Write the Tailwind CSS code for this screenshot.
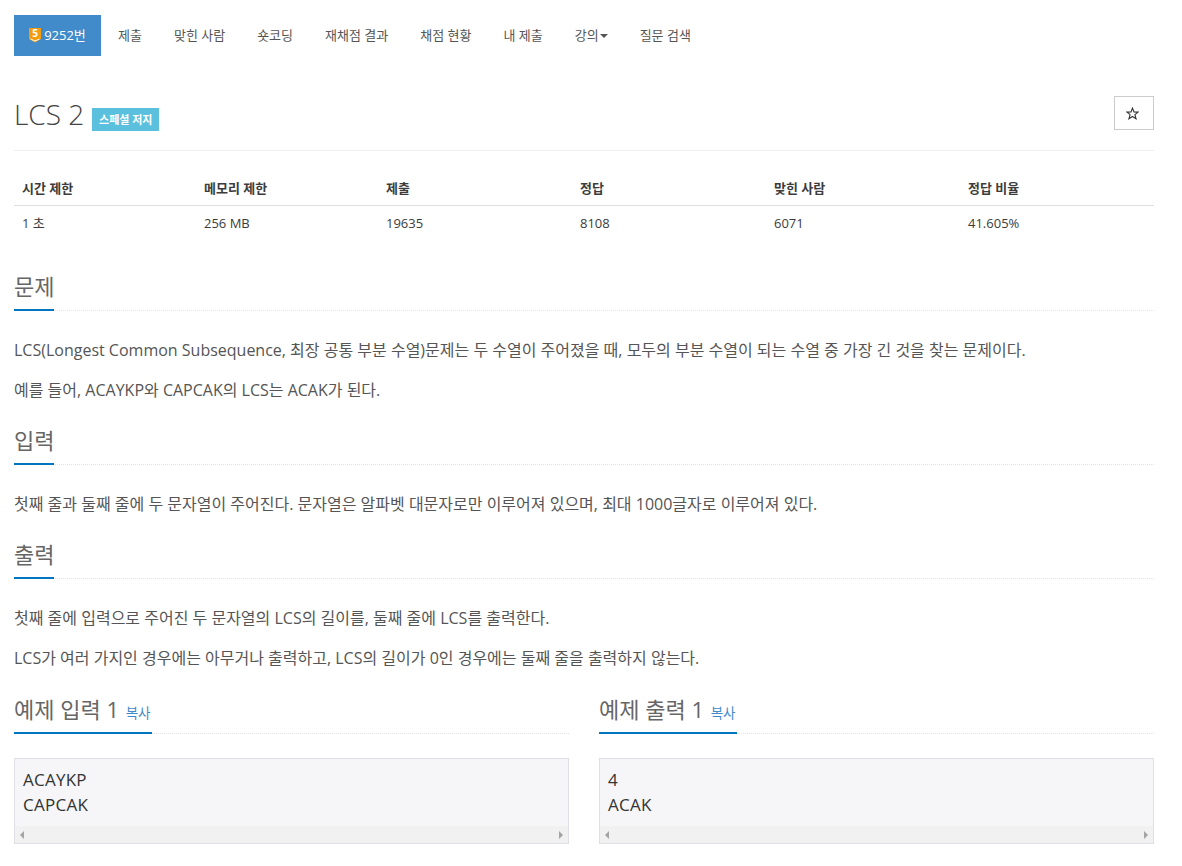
<!DOCTYPE html>
<html lang="ko">

<head>
    <meta charset="UTF-8">
    <title>LCS 2</title>
    <script src="https://cdn.jsdelivr.net/npm/@tailwindcss/browser@4"></script>
</head>

<body class="bg-white text-[#555] font-['Open_Sans','Noto_Sans_CJK_KR',sans-serif] text-[13px] overflow-hidden h-[866px]">
    <div class="w-[1140px] ml-[14px]">

        <!-- 메뉴 -->
        <ul class="flex pt-[15px] text-[13px] h-[56px] leading-[41px]">
            <li class="bg-[#428bca] text-white w-[87px] flex items-center justify-center text-[13px]">
                <svg class="w-[12px] h-[15px] mr-[3px] overflow-visible" viewBox="0 0 12 15">
                    <path d="M0 0H12V11L6 14.5L0 11Z" fill="#f59c0c" />
                    <path d="M1.5 11L6 13L10.5 11" fill="none" stroke="#fff" stroke-width="1" />
                    <text x="6" y="9" text-anchor="middle" font-size="10" font-weight="700" fill="#fff">5</text>
                </svg>
                9252번
            </li>
            <li class="ml-[17px]">제출</li>
            <li class="ml-[32px]">맞힌 사람</li>
            <li class="ml-[32px]">숏코딩</li>
            <li class="ml-[32px]">재채점 결과</li>
            <li class="ml-[32px]">채점 현황</li>
            <li class="ml-[32px]">내 제출</li>
            <li class="ml-[32px] flex items-center">강의<span class="w-0 h-0 ml-[1px] border-x-[4px] border-x-transparent border-t-[4px] border-t-[#555]"></span></li>
            <li class="ml-[32px]">질문 검색</li>
        </ul>

        <!-- 제목 -->
        <div class="flex items-start justify-between h-[95px] pt-[40px] border-b border-[#eee]">
            <h1 class="flex items-center text-[28px] leading-[38px] font-light text-[#444] -mt-[1px]">LCS 2
                <span class="ml-[8px] mt-[10px] h-[23px] w-[67px] bg-[#5bc0de] text-white text-[11px] font-bold leading-[23px] text-center">스페셜 저지</span>
            </h1>
            <button class="w-[40px] h-[34px] border border-[#ccc] flex items-center justify-center pr-[3px]">
                <svg class="w-[13px] h-[13px]" viewBox="0 0 14 14" fill="none" stroke="#333" stroke-width="1.2">
                    <path d="M7 1.2L8.6 5.3L13 5.5L9.6 8.2L10.8 12.6L7 10.2L3.2 12.6L4.4 8.2L1 5.5L5.4 5.3Z" />
                </svg>
            </button>
        </div>

        <!-- 제한 표 -->
        <table class="w-full mt-[20px] table-fixed text-left text-[13px] text-[#3c3c3c]">
            <thead>
                <tr class="border-b border-[#ddd] h-[34px]">
                    <th class="w-[182px] pl-[8px] pt-[2px] font-bold">시간 제한</th>
                    <th class="w-[182px] pl-[8px] pt-[2px] font-bold">메모리 제한</th>
                    <th class="w-[194px] pl-[8px] pt-[2px] font-bold">제출</th>
                    <th class="w-[194px] pl-[8px] pt-[2px] font-bold">정답</th>
                    <th class="w-[194px] pl-[8px] pt-[2px] font-bold">맞힌 사람</th>
                    <th class="pl-[8px] pt-[2px] font-bold">정답 비율</th>
                </tr>
            </thead>
            <tbody>
                <tr class="h-[37px]">
                    <td class="pl-[8px]">1 초</td>
                    <td class="pl-[8px]">256 MB</td>
                    <td class="pl-[8px]">19635</td>
                    <td class="pl-[8px]">8108</td>
                    <td class="pl-[8px]">6071</td>
                    <td class="pl-[8px]">41.605%</td>
                </tr>
            </tbody>
        </table>

        <!-- 문제 -->
        <section class="mt-[27px] text-[16px]">
            <div class="border-b border-dotted border-[#e4e4e4] h-[42px]">
                <h2 class="inline-block text-[22px] leading-[34px] h-[42px] border-b-2 border-[#0076c0] w-[40px] whitespace-nowrap text-[#666]">문제</h2>
            </div>
            <p class="mt-[27px] leading-[24px]">LCS(Longest Common Subsequence, 최장 공통 부분 수열)문제는 두 수열이 주어졌을 때, 모두의 부분 수열이 되는 수열 중 가장 긴 것을 찾는 문제이다.</p>
            <p class="mt-[16px] leading-[24px]">예를 들어, ACAYKP와 CAPCAK의 LCS는 ACAK가 된다.</p>
        </section>

        <!-- 입력 -->
        <section class="mt-[21px] text-[16px]">
            <div class="border-b border-dotted border-[#e4e4e4] h-[42px]">
                <h2 class="inline-block text-[22px] leading-[34px] h-[42px] border-b-2 border-[#0076c0] w-[40px] whitespace-nowrap text-[#666]">입력</h2>
            </div>
            <p class="mt-[27px] leading-[24px]">첫째 줄과 둘째 줄에 두 문자열이 주어진다. 문자열은 알파벳 대문자로만 이루어져 있으며, 최대 1000글자로 이루어져 있다.</p>
        </section>

        <!-- 출력 -->
        <section class="mt-[21px] text-[16px]">
            <div class="border-b border-dotted border-[#e4e4e4] h-[42px]">
                <h2 class="inline-block text-[22px] leading-[34px] h-[42px] border-b-2 border-[#0076c0] w-[40px] whitespace-nowrap text-[#666]">출력</h2>
            </div>
            <p class="mt-[27px] leading-[24px]">첫째 줄에 입력으로 주어진 두 문자열의 LCS의 길이를, 둘째 줄에 LCS를 출력한다.</p>
            <p class="mt-[16px] leading-[24px]">LCS가 여러 가지인 경우에는 아무거나 출력하고, LCS의 길이가 0인 경우에는 둘째 줄을 출력하지 않는다.</p>
        </section>

        <!-- 예제 -->
        <div class="grid grid-cols-2 gap-[30px] mt-[22px]">
            <div>
                <div class="border-b border-dotted border-[#e4e4e4] h-[42px]">
                    <h2 class="inline-block text-[22px] leading-[34px] h-[42px] border-b-2 border-[#0076c0] w-[138px] whitespace-nowrap text-[#666]">예제 입력 1 <span class="ml-[1px] text-[13.5px] text-[#428bca]">복사</span></h2>
                </div>
                <pre class="mt-[24px] h-[86px] border border-[#dfe0e6] bg-[#f6f6f8] text-[17px] tracking-[0.25px] leading-[25px] text-[#333] pt-[8px] pl-[8px] relative font-['Open_Sans','Noto_Sans_CJK_KR',sans-serif]">ACAYKP
CAPCAK<span class="absolute left-0 right-0 bottom-0 h-[17px] bg-[#f1f1f1] flex items-center justify-between px-[5px]"><span class="w-0 h-0 border-y-[4px] border-y-transparent border-r-[4px] border-r-[#a3a3a3]"></span><span class="w-0 h-0 border-y-[4px] border-y-transparent border-l-[4px] border-l-[#a3a3a3]"></span></span></pre>
            </div>
            <div>
                <div class="border-b border-dotted border-[#e4e4e4] h-[42px]">
                    <h2 class="inline-block text-[22px] leading-[34px] h-[42px] border-b-2 border-[#0076c0] w-[138px] whitespace-nowrap text-[#666]">예제 출력 1 <span class="ml-[1px] text-[13.5px] text-[#428bca]">복사</span></h2>
                </div>
                <pre class="mt-[24px] h-[86px] border border-[#dfe0e6] bg-[#f6f6f8] text-[17px] tracking-[0.25px] leading-[25px] text-[#333] pt-[8px] pl-[8px] relative font-['Open_Sans','Noto_Sans_CJK_KR',sans-serif]">4
ACAK<span class="absolute left-0 right-0 bottom-0 h-[17px] bg-[#f1f1f1] flex items-center justify-between px-[5px]"><span class="w-0 h-0 border-y-[4px] border-y-transparent border-r-[4px] border-r-[#a3a3a3]"></span><span class="w-0 h-0 border-y-[4px] border-y-transparent border-l-[4px] border-l-[#a3a3a3]"></span></span></pre>
            </div>
        </div>
    </div>
</body>

</html>
